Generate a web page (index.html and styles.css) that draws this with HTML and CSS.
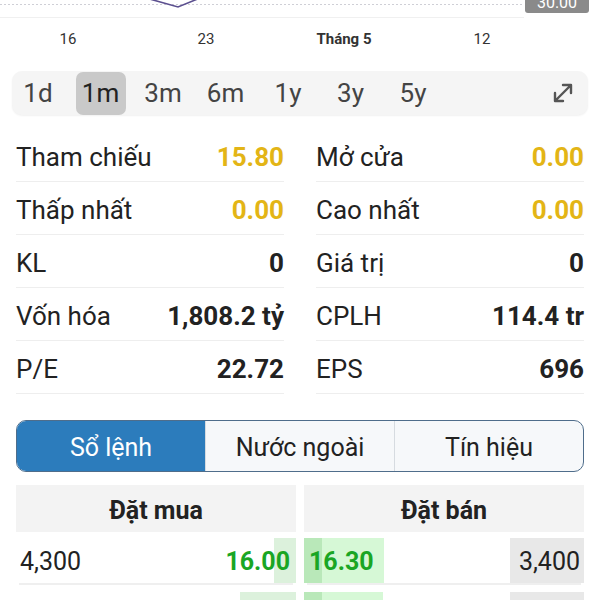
FILE: index.html
```html
<!DOCTYPE html>
<html lang="vi">

<head>
    <meta charset="UTF-8">
    <title>Chi tiết cổ phiếu</title>
    <link rel="stylesheet" href="styles.css">
</head>

<body>
    <div class="chart">
        <svg class="chart-lines" width="600" height="22" viewBox="0 0 600 22">
            <line x1="0" y1="4.5" x2="522" y2="4.5" stroke="#cfcfd6" stroke-width="1" stroke-dasharray="2 2" />
            <line x1="0" y1="17.5" x2="524" y2="17.5" stroke="#f0f0f0" stroke-width="1" />
            <polyline points="146,-2 178,7 200,-2" fill="none" stroke="#5b4f8f" stroke-width="1.6" />
        </svg>
        <span class="price-tag">30.00</span>
    </div>

    <div class="axis">
        <span>16</span>
        <span>23</span>
        <span class="month">Tháng 5</span>
        <span>12</span>
    </div>

    <div class="periods">
        <span class="period">1d</span>
        <span class="period active">1m</span>
        <span class="period">3m</span>
        <span class="period">6m</span>
        <span class="period">1y</span>
        <span class="period">3y</span>
        <span class="period">5y</span>
        <span class="expand">
            <svg width="24" height="24" viewBox="0 0 24 24">
                <path d="M4 20 L20 4 M12 4 H20 V12 M4 12 V20 H12" fill="none" stroke="#555" stroke-width="2.4" stroke-linecap="round" stroke-linejoin="round" />
            </svg>
        </span>
    </div>

    <div class="stats">
        <div class="stat"><span>Tham chiếu</span><b class="ref">15.80</b></div>
        <div class="stat"><span>Mở cửa</span><b class="ref">0.00</b></div>
        <div class="stat"><span>Thấp nhất</span><b class="ref">0.00</b></div>
        <div class="stat"><span>Cao nhất</span><b class="ref">0.00</b></div>
        <div class="stat"><span>KL</span><b>0</b></div>
        <div class="stat"><span>Giá trị</span><b>0</b></div>
        <div class="stat"><span>Vốn hóa</span><b>1,808.2 tỷ</b></div>
        <div class="stat"><span>CPLH</span><b>114.4 tr</b></div>
        <div class="stat"><span>P/E</span><b>22.72</b></div>
        <div class="stat"><span>EPS</span><b>696</b></div>
    </div>

    <div class="tabs">
        <span class="tab active">Sổ lệnh</span>
        <span class="tab">Nước ngoài</span>
        <span class="tab">Tín hiệu</span>
    </div>

    <div class="book">
        <div class="book-head">Đặt mua</div>
        <div class="book-head">Đặt bán</div>

        <div class="book-side">
            <span class="bar buy" style="width: 22px"></span>
            <span class="vol">4,300</span>
            <b class="price">16.00</b>
        </div>
        <div class="book-side">
            <span class="bar sell" style="width: 80px"><i style="width: 18px"></i></span>
            <b class="price">16.30</b>
            <span class="vol boxed">3,400</span>
        </div>

        <!-- dòng thứ hai chỉ lộ phần nền -->
        <div class="book-side">
            <span class="bar buy" style="width: 56px"></span>
        </div>
        <div class="book-side">
            <span class="bar sell" style="width: 79px"><i style="width: 18px"></i></span>
            <span class="vol boxed"></span>
        </div>
    </div>
</body>

</html>
```

FILE: styles.css
```css
* {
    margin: 0;
    padding: 0;
    box-sizing: border-box;
}

body {
    width: 600px;
    height: 600px;
    background: #fff;
    color: #222;
    font-family: Roboto, "Noto Sans", sans-serif;
    overflow: hidden;
}

/* phần cuối biểu đồ */
.chart {
    height: 22px;
    position: relative;
    overflow: hidden;
}

.chart-lines {
    display: block;
}

.price-tag {
    position: absolute;
    left: 525px;
    top: -8px;
    width: 64px;
    height: 21px;
    line-height: 21px;
    text-align: center;
    background: #8a8a8a;
    color: #fff;
    font-size: 16px;
    border-radius: 0 0 3px 3px;
}

.axis {
    display: flex;
    margin-left: -1px;
    padding-top: 8px;
    font-size: 15px;
    line-height: 18px;
    color: #333;
}

.axis span {
    width: 138px;
    text-align: center;
}

.axis .month {
    font-weight: bold;
}

/* chọn khoảng thời gian */
.periods {
    margin: 23px 12px 0;
    height: 44px;
    padding-left: 1px;
    display: flex;
    align-items: center;
    gap: 12.5px;
    background: #f5f5f5;
    border-radius: 10px;
    box-shadow: 0 1px 2px rgba(0, 0, 0, 0.06);
}

.period {
    width: 50px;
    height: 43px;
    line-height: 43px;
    text-align: center;
    font-size: 26px;
    color: #444;
    border-radius: 7px;
}

.period.active {
    background: #c9c9c9;
    color: #222;
}

.expand {
    margin-left: auto;
    margin-right: 13px;
    display: flex;
}

/* bảng chỉ số */
.stats {
    margin-top: 14px;
    padding: 0 16px;
    display: grid;
    grid-template-columns: 1fr 1fr;
    column-gap: 32px;
}

.stat {
    height: 53px;
    display: flex;
    align-items: center;
    justify-content: space-between;
    border-bottom: 1px solid #eeeeee;
    font-size: 26px;
    padding-top: 3px;
}

.stat b {
    font-weight: bold;
    color: #222;
}

.stat b.ref {
    color: #e3b516;
}

/* tab */
.tabs {
    margin: 26px 16px 0;
    height: 52px;
    display: flex;
    border: 1.5px solid #4f6d8b;
    border-radius: 10px;
    overflow: hidden;
    background: #f6f8fa;
}

.tab {
    flex: 1;
    display: flex;
    align-items: center;
    justify-content: center;
    font-size: 25px;
    color: #222;
    padding-top: 2px;
}

.tab + .tab {
    border-left: 1px solid #d6dbe0;
}

.tab.active {
    background: #2c7cbc;
    color: #fff;
}

/* sổ lệnh */
.book {
    margin-top: 13px;
    padding: 0 16px;
    display: grid;
    grid-template-columns: 1fr 1fr;
    column-gap: 8px;
}

.book-head {
    height: 47px;
    padding-top: 3px;
    display: flex;
    align-items: center;
    justify-content: center;
    background: #f3f3f3;
    font-size: 25px;
    font-weight: bold;
}

.book-side {
    position: relative;
    height: 45px;
    margin: 6px 0 3px;
    padding-top: 2px;
    display: flex;
    align-items: center;
    justify-content: space-between;
    font-size: 25px;
    box-shadow: 0 5px 0 -3px #efefef;
}

.bar {
    position: absolute;
    top: 0;
    height: 45px;
}

.bar.buy {
    right: 0;
    background: #dcf1dc;
}

.bar.sell {
    left: 0;
    background: #d6f8d6;
}

.bar.sell i {
    display: block;
    height: 100%;
    background: #b9e8b9;
}

.vol,
.price {
    position: relative;
}

.vol {
    padding-left: 4px;
}

.price {
    color: #1aa624;
    font-weight: bold;
    padding-right: 6px;
}

.bar + .price {
    padding: 0 0 0 5px;
}

.vol.boxed {
    height: 45px;
    width: 74px;
    margin-top: -2px;
    margin-left: auto;
    display: flex;
    align-items: center;
    justify-content: flex-end;
    padding: 2px 4px 0 0;
    background: #e8e8e8;
}
```
